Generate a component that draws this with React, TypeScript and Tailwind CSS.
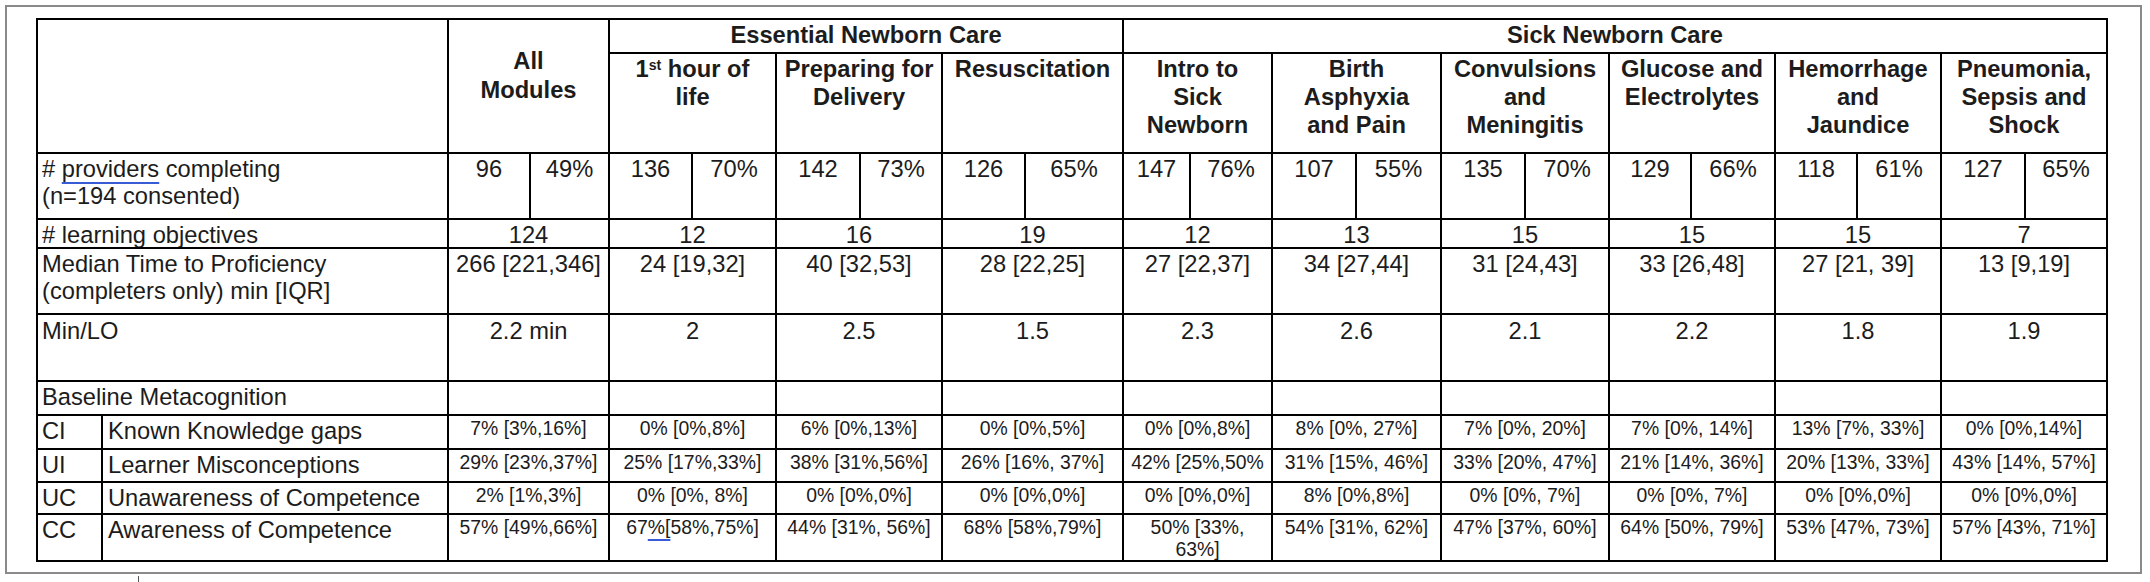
import React from "react";

type Mod = { head: React.ReactNode; n: string; pct: string; lo: string; med: string; minlo: string; ci: string; ui: string; uc: string; cc: React.ReactNode };

const U = ({ children }: { children: React.ReactNode }) => (
  <span className="underline decoration-[#3a5bd6] decoration-2 underline-offset-[5px]">{children}</span>
);

const mods: Mod[] = [
  { head: (<><span>1<sup className="text-[14px]">st</sup> hour of</span><br />life</>), n: "136", pct: "70%", lo: "12", med: "24 [19,32]", minlo: "2", ci: "0% [0%,8%]", ui: "25% [17%,33%]", uc: "0% [0%, 8%]", cc: (<>67<U>%[</U>58%,75%]</>) },
  { head: (<>Preparing for<br />Delivery</>), n: "142", pct: "73%", lo: "16", med: "40 [32,53]", minlo: "2.5", ci: "6% [0%,13%]", ui: "38% [31%,56%]", uc: "0% [0%,0%]", cc: "44% [31%, 56%]" },
  { head: (<>Resuscitation</>), n: "126", pct: "65%", lo: "19", med: "28 [22,25]", minlo: "1.5", ci: "0% [0%,5%]", ui: "26% [16%, 37%]", uc: "0% [0%,0%]", cc: "68% [58%,79%]" },
  { head: (<>Intro to<br />Sick<br />Newborn</>), n: "147", pct: "76%", lo: "12", med: "27 [22,37]", minlo: "2.3", ci: "0% [0%,8%]", ui: "42% [25%,50%", uc: "0% [0%,0%]", cc: (<>50% [33%,<br />63%]</>) },
  { head: (<>Birth<br />Asphyxia<br />and Pain</>), n: "107", pct: "55%", lo: "13", med: "34 [27,44]", minlo: "2.6", ci: "8% [0%, 27%]", ui: "31% [15%, 46%]", uc: "8% [0%,8%]", cc: "54% [31%, 62%]" },
  { head: (<>Convulsions<br />and<br />Meningitis</>), n: "135", pct: "70%", lo: "15", med: "31 [24,43]", minlo: "2.1", ci: "7% [0%, 20%]", ui: "33% [20%, 47%]", uc: "0% [0%, 7%]", cc: "47% [37%, 60%]" },
  { head: (<>Glucose and<br />Electrolytes</>), n: "129", pct: "66%", lo: "15", med: "33 [26,48]", minlo: "2.2", ci: "7% [0%, 14%]", ui: "21% [14%, 36%]", uc: "0% [0%, 7%]", cc: "64% [50%, 79%]" },
  { head: (<>Hemorrhage<br />and<br />Jaundice</>), n: "118", pct: "61%", lo: "15", med: "27 [21, 39]", minlo: "1.8", ci: "13% [7%, 33%]", ui: "20% [13%, 33%]", uc: "0% [0%,0%]", cc: "53% [47%, 73%]" },
  { head: (<>Pneumonia,<br />Sepsis and<br />Shock</>), n: "127", pct: "65%", lo: "7", med: "13 [9,19]", minlo: "1.9", ci: "0% [0%,14%]", ui: "43% [14%, 57%]", uc: "0% [0%,0%]", cc: "57% [43%, 71%]" },
];

const all = { n: "96", pct: "49%", lo: "124", med: "266 [221,346]", minlo: "2.2 min", ci: "7% [3%,16%]", ui: "29% [23%,37%]", uc: "2% [1%,3%]", cc: "57% [49%,66%]" };

const cell = "bg-white overflow-hidden";
const mainC = `${cell} text-[23.7px] leading-[27px] pt-[2px] text-center whitespace-nowrap`;
const metaC = `${cell} text-[19.4px] leading-[22px] pt-[1px] text-center whitespace-nowrap col-span-2`;
const labelC = `${cell} text-[23.7px] leading-[27px] pt-[2px] pl-[4px] whitespace-nowrap`;
const headC = `${cell} text-center font-bold text-[23.7px] leading-[28px] whitespace-nowrap`;

export default function App() {
  const vals = [all, ...mods];
  return (
    <div className="w-[2150px] h-[582px] bg-white font-['Liberation_Sans',Arial,sans-serif] text-[#1c1c1c]">
      <div className="ml-[5px] mt-[5px] w-[2137px] h-[569px] border-2 border-[#8a8a8a] pl-[29px] pt-[11px]">
        <div className="grid w-max bg-black p-[2px] gap-[2px] grid-cols-[63px_344px_80px_77px_81px_82px_82px_80px_81px_96px_65px_80px_82px_83px_82px_82px_80px_82px_80px_82px_82px_80px] grid-rows-[32px_98px_64px_27px_64px_65px_32px_32px_31px_30px_45px]">
          {/* header */}
          <div className={`${cell} col-span-2 row-span-2`} />
          <div className={`${headC} col-span-2 row-span-2 leading-[29px] pt-[27px]`}>
            All<br />Modules
          </div>
          <div className={`${headC} col-span-6 pt-[1px]`}>Essential Newborn Care</div>
          <div className={`${headC} col-span-12 pt-[1px]`}>Sick Newborn Care</div>
          {mods.map((m, i) => (
            <div key={"h" + i} className={`${headC} col-span-2 pt-[1px]`}>
              {m.head}
            </div>
          ))}

          {/* providers */}
          <div className={`${labelC} col-span-2`}>
            # <U>providers</U> completing<br />(n=194 consented)
          </div>
          {vals.map((v, i) => (
            <React.Fragment key={"p" + i}>
              <div className={mainC}>{v.n}</div>
              <div className={mainC}>{v.pct}</div>
            </React.Fragment>
          ))}

          {/* learning objectives */}
          <div className={`${labelC} col-span-2 pt-[1px]`}>
            # <U>learning</U> objectives
          </div>
          {vals.map((v, i) => (
            <div key={"l" + i} className={`${mainC} col-span-2 pt-[1px]`}>{v.lo}</div>
          ))}

          {/* median */}
          <div className={`${labelC} col-span-2`}>
            Median Time to Proficiency<br />(completers only) min [IQR]
          </div>
          {vals.map((v, i) => (
            <div key={"m" + i} className={`${mainC} col-span-2`}>{v.med}</div>
          ))}

          {/* min/LO */}
          <div className={`${labelC} col-span-2 pt-[3px]`}>Min/LO</div>
          {vals.map((v, i) => (
            <div key={"n" + i} className={`${mainC} col-span-2 pt-[3px]`}>{v.minlo}</div>
          ))}

          {/* baseline */}
          <div className={`${labelC} col-span-2 pt-[1px]`}>Baseline Metacognition</div>
          {vals.map((_, i) => (
            <div key={"b" + i} className={`${cell} col-span-2`} />
          ))}

          {([
            ["CI", "Known Knowledge gaps", "ci"],
            ["UI", "Learner Misconceptions", "ui"],
            ["UC", "Unawareness of Competence", "uc"],
            ["CC", "Awareness of Competence", "cc"],
          ] as const).map(([code, desc, key]) => (
            <React.Fragment key={code}>
              <div className={labelC}>{code}</div>
              <div className={`${labelC} pl-[5px]`}>{desc}</div>
              {vals.map((v, i) => (
                <div key={key + i} className={metaC}>{(v as any)[key]}</div>
              ))}
            </React.Fragment>
          ))}
        </div>
      </div>
      <div className="ml-[138px] mt-[2px] w-px h-[6px] bg-[#555]" />
    </div>
  );
}
